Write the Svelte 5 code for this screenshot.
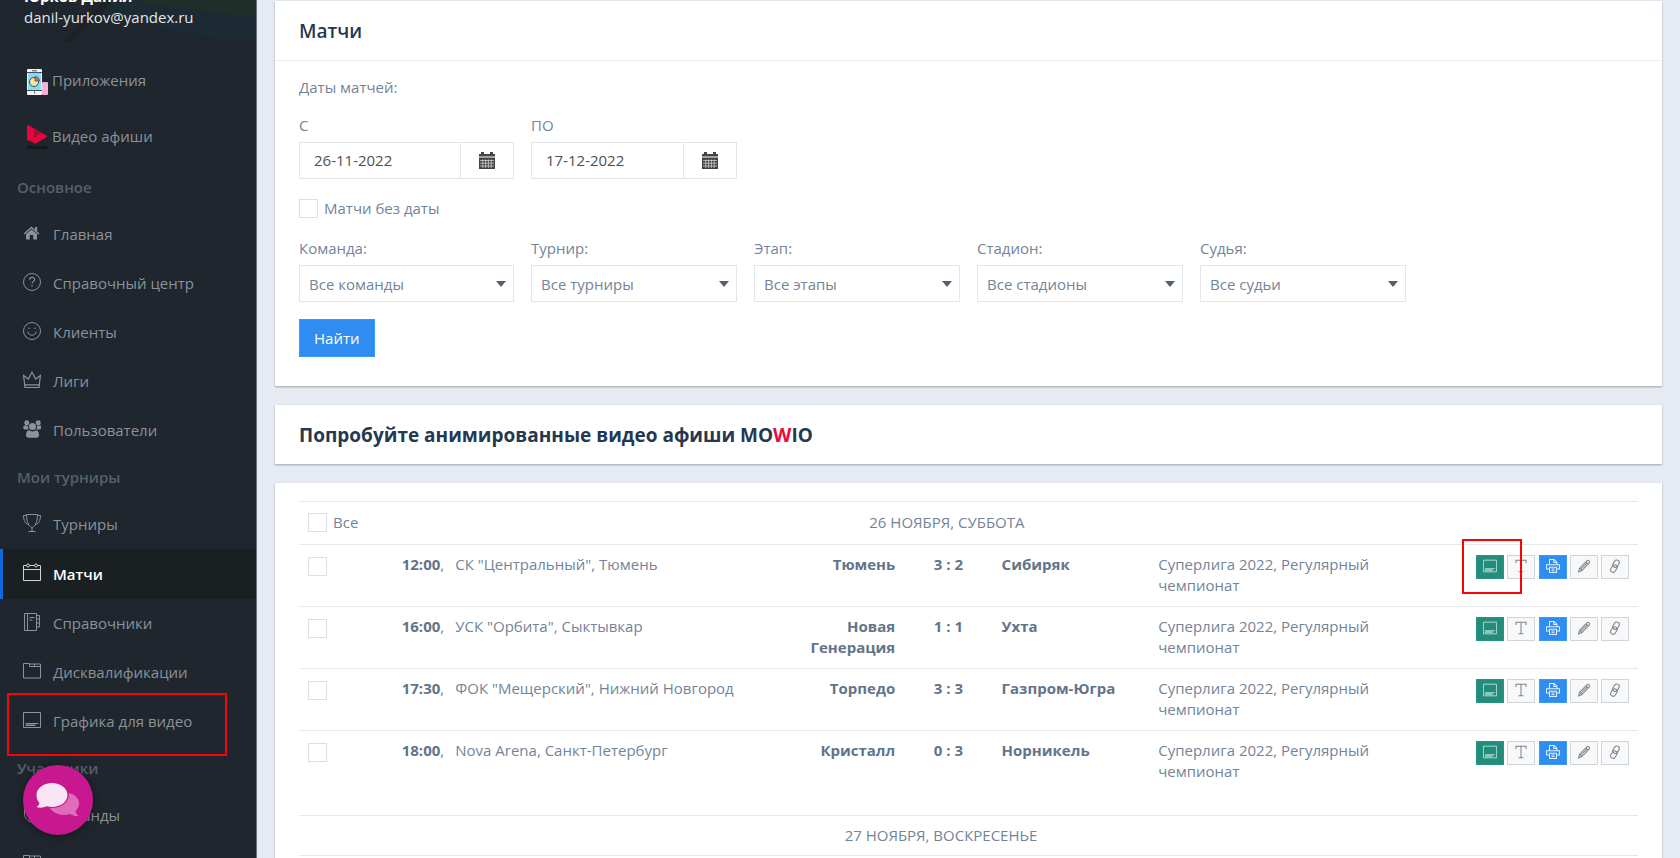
<script lang="ts">
  let withoutDate = $state(false);
  let allChecked = $state(false);
  let dateFrom = $state('26-11-2022');
  let dateTo = $state('17-12-2022');

  const mainMenu = [
    { icon: 'home', title: 'Главная' },
    { icon: 'help', title: 'Справочный центр' },
    { icon: 'smile', title: 'Клиенты' },
    { icon: 'crown', title: 'Лиги' },
    { icon: 'users', title: 'Пользователи' }
  ];

  const tournamentMenu = [
    { icon: 'cup', title: 'Турниры' },
    { icon: 'calendar', title: 'Матчи', active: true },
    { icon: 'book', title: 'Справочники' },
    { icon: 'folder', title: 'Дисквалификации' },
    { icon: 'screen', title: 'Графика для видео', marked: true }
  ];

  const memberMenu = [
    { icon: 'shield', title: 'Команды' },
    { icon: 'folder', title: 'Игроки' }
  ];

  const groups = [
    { title: 'Основное', items: mainMenu },
    { title: 'Мои турниры', items: tournamentMenu },
    { title: 'Участники', items: memberMenu }
  ];

  const filters = [
    { id: 'team', label: 'Команда:', value: 'Все команды' },
    { id: 'tournament', label: 'Турнир:', value: 'Все турниры' },
    { id: 'stage', label: 'Этап:', value: 'Все этапы' },
    { id: 'stadium', label: 'Стадион:', value: 'Все стадионы' },
    { id: 'referee', label: 'Судья:', value: 'Все судьи' }
  ];

  let matches = $state([
    { time: '12:00', place: 'СК "Центральный", Тюмень', home: 'Тюмень', score: '3 : 2', away: 'Сибиряк', checked: false },
    { time: '16:00', place: 'УСК "Орбита", Сыктывкар', home: 'Новая Генерация', score: '1 : 1', away: 'Ухта', checked: false },
    { time: '17:30', place: 'ФОК "Мещерский", Нижний Новгород', home: 'Торпедо', score: '3 : 3', away: 'Газпром-Югра', checked: false },
    { time: '18:00', place: 'Nova Arena, Санкт-Петербург', home: 'Кристалл', score: '0 : 3', away: 'Норникель', checked: false }
  ]);

  function toggleAll() {
    matches.forEach((m) => (m.checked = allChecked));
  }
</script>

<svelte:head>
  <title>Матчи</title>
</svelte:head>

{#snippet icon(name: string)}
  <svg class="icon" width="18" height="18" viewBox="0 0 18 18" fill="none" stroke="currentColor" aria-hidden="true">
    {#if name === 'home'}
      <path fill="currentColor" stroke="none" d="M8.500 5.500 14 10v5.500h-3.800v-4.500H6.800v4.500H3V10z" />
      <path stroke-width="1.500" d="M1 10 8.500 3.500 16 10" />
      <path fill="currentColor" stroke="none" d="M12 3h2.200v4.500L12 5.700z" />
    {:else if name === 'help'}
      <circle cx="9" cy="9" r="8.500" />
      <path stroke-width="1.200" d="M6.600 6.800c0-3.400 5-3.200 5-.3 0 2-2.500 1.800-2.500 4M9 12v1.500" />
    {:else if name === 'smile'}
      <circle cx="9" cy="9" r="8.500" />
      <path d="M4.800 9.500c.7 5 7.700 5 8.400 0" />
      <circle cx="6" cy="6.200" r=".8" fill="currentColor" stroke="none" />
      <circle cx="12" cy="6.200" r=".8" fill="currentColor" stroke="none" />
    {:else if name === 'crown'}
      <path stroke-width="1.200" d="M2 16.500.600 4.500 5.300 8 9 1.200 12.700 8l4.700-3.500L16 16.500zM2 13.800h14" />
    {:else if name === 'users'}
      <g fill="currentColor" stroke="none">
        <circle cx="3.800" cy="2.800" r="2.500" />
        <circle cx="15.200" cy="2.800" r="2.500" />
        <circle cx="9.500" cy="6.500" r="3.600" />
        <path d="M1.500 5.500h3.300c0 1.700.4 2.900 1.200 4H1.800C-.3 9.500-.2 6 1.500 5.500zM17.500 5.500h-3.300c0 1.700-.4 2.900-1.200 4h3.400c2.200 0 2.900-3.500 1.100-4zM6 10.300c2 1.500 5 1.500 7 0 2.300.3 3 2.700 3 4.700 0 1.800-1 2.700-2.500 2.700h-8C4 17.700 3 16.800 3 15c0-2 .7-4.400 3-4.700z" />
      </g>
    {:else if name === 'cup'}
      <path d="M3.500.500h11c0 6-1.500 11-5.500 13.500C5 11.500 3.500 6.500 3.500.500zM3.500 1.500h-3c0 5 2 8.500 5.500 9.500M14.500 1.500h3c0 5-2 8.500-5.500 9.500M9 14v3M5.500 17.500h7" />
    {:else if name === 'calendar'}
      <path d="M3.500 2.500h-3v15h17v-15h-3M6.500 2.500h5M.500 6.500h17" />
      <circle cx="5" cy="2.500" r="1.500" />
      <circle cx="13" cy="2.500" r="1.500" />
    {:else if name === 'book'}
      <path d="M1.500.500h12v17h-12zM4.500.500v17M6.500 4.500h5M6.500 7h3M13.500 2.500h3v3.500h-3M16.500 6v4h-3M16.500 10v4h-3" />
    {:else if name === 'folder'}
      <path d="M.500 1.500h6v3h11v11.500H.500zM6.500 2h11v3M11.500 2v2.500" />
    {:else if name === 'screen'}
      <path d="M.500 1.500h17v15H.500zM2.500 12.500h13M2.500 14.500h10" />
      <path opacity=".5" d="M2.500 13.500h10" />
    {:else if name === 'shield'}
      <path d="M9 .500 16.500 3v6c0 4-3 7-7.500 8.500C4.500 16 1.500 13 1.500 9V3z" />
    {:else if name === 'text'}
      <path stroke-width="1.300" d="M2.500 5V1.700h13V5M9 1.700v14.800M6 16.500h6" />
    {:else if name === 'print'}
      <path stroke-width="1.300" d="M4.500 7.500V.700h6l3.500 3.500v3.300M10 .700v3.800h4M4 13H.700V7.500h16.600V13H14M4.500 10.500h9v6.800h-9zM7 13h4M7 15.200h4" />
    {:else if name === 'pencil'}
      <path stroke-width="1.300" d="M2 16.500l1.300-4.700L13 2.100c1.300-1.300 4.200 1.400 2.900 2.800L6.300 14.800zM11.500 3.800l2.900 2.900M4 12l2 2.200M5.500 12.500 13 5" />
    {:else if name === 'link'}
      <g stroke-width="1.300">
        <rect x="7" y=".8" width="6.500" height="10" rx="3.200" transform="rotate(32 10 6)" />
        <rect x="4.500" y="7.500" width="6.500" height="10" rx="3.200" transform="rotate(32 8 12)" />
      </g>
    {/if}
  </svg>
{/snippet}

{#snippet calendarGlyph()}
  <svg width="16" height="17" viewBox="0 0 16 17" aria-hidden="true">
    <path fill="#444" d="M0 2h2V0h3v2h6V0h3v2h2v2.500H0zM0 5.500h16V17H0z" />
    <path stroke="#ddd" stroke-width=".7" d="M1 8.500h14M1 11.200h14M1 14h14M3.800 7.500v8.500M6.600 7.500v8.500M9.400 7.500v8.500M12.200 7.500v8.500" />
  </svg>
{/snippet}

<div class="page">
  <aside class="sidebar">
    <div class="user">
      <svg class="user-bg" width="257" height="42" viewBox="0 0 257 42" preserveAspectRatio="none" aria-hidden="true">
        <path fill="#1c2a33" d="M100 0h157v42C200 40 150 22 95 12z" />
        <path fill="#1f2e28" d="M125 0h132v17C215 13 170 8 125 0z" />
        <path fill="#1c2228" d="M62 42 105 0h10L72 42z" />
      </svg>
      <div class="user-name">Юрков Данил</div>
      <div class="user-mail">danil-yurkov@yandex.ru</div>
    </div>

    <a class="app" href="#apps">
      <svg width="22" height="26" viewBox="0 0 22 26" aria-hidden="true">
        <rect x="15" y="13" width="6" height="13" rx="1" fill="#f2b3d6" />
        <rect width="15" height="26" rx="1" fill="#f4f4f4" />
        <path fill="#7fdcf2" d="M1 4h13v17H1z" />
        <path stroke="#44505a" d="M0 3.500h15M0 21.500h15M5 1.800h5M7.500 22.500v2" />
        <circle cx="7" cy="13" r="4.500" fill="#f3e79b" stroke="#44505a" />
        <path fill="#f0596b" stroke="#44505a" stroke-width=".7" d="M8 12V7.500c2.500 0 4.500 2 4.500 4.500z" />
      </svg>
      <span>Приложения</span>
    </a>
    <a class="app" href="#video">
      <svg width="22" height="26" viewBox="0 0 22 26" aria-hidden="true">
        <path fill="#e6053a" d="M0 1.500C0 .4 1 0 2 .6l17 9.600c1 .5 1 1.600 0 2.100L8 18.500 2 15.600c-1 .5-2 0-2-1.200z" />
        <path fill="#a80c2e" d="M7 3.500 16 9 7 14z" />
        <path fill="#e6053a" d="M7 18V13l7-5 5 2.500c1 .5 1 1.500 0 2L8.500 18.500z" />
        <text x="0" y="24" font-size="6" font-weight="700" fill="#0e1114">mowio</text>
      </svg>
      <span>Видео афиши</span>
    </a>

    {#each groups as group}
      <div class="group">{group.title}</div>
      <nav aria-label={group.title}>
        {#each group.items as item}
          <a class="item" class:active={item.active} href="#{item.icon}">
            {@render icon(item.icon)}
            <span>{item.title}</span>
            {#if item.marked}
              <i class="mark mark-menu"></i>
            {/if}
          </a>
        {/each}
      </nav>
    {/each}
  </aside>

  <main class="content">
    <section class="panel">
      <h1 class="panel-title">Матчи</h1>
      <form class="filter" onsubmit={(e) => e.preventDefault()}>
        <p class="caption">Даты матчей:</p>
        <div class="row">
          <div class="field">
            <label for="date-from">С</label>
            <div class="date">
              <input id="date-from" type="text" bind:value={dateFrom} />
              <button type="button" aria-label="Выбрать дату начала">{@render calendarGlyph()}</button>
            </div>
          </div>
          <div class="field">
            <label for="date-to">ПО</label>
            <div class="date">
              <input id="date-to" type="text" bind:value={dateTo} />
              <button type="button" aria-label="Выбрать дату окончания">{@render calendarGlyph()}</button>
            </div>
          </div>
        </div>
        <label class="check">
          <input type="checkbox" bind:checked={withoutDate} />
          <span>Матчи без даты</span>
        </label>
        <div class="row">
          {#each filters as f}
            <div class="field">
              <label for={f.id}>{f.label}</label>
              <div class="select">
                <select id={f.id}>
                  <option>{f.value}</option>
                </select>
                <svg width="10" height="6" viewBox="0 0 10 6" aria-hidden="true"><path fill="#526170" d="M0 0h10L5 6z" /></svg>
              </div>
            </div>
          {/each}
        </div>
        <button class="find" type="submit">Найти</button>
      </form>
    </section>

    <section class="panel promo">
      <h2>Попробуйте анимированные видео афиши MO<span>W</span>IO</h2>
    </section>

    <section class="panel list">
      <table>
        <colgroup>
          <col class="c-check" />
          <col class="c-time" />
          <col class="c-place" />
          <col class="c-home" />
          <col class="c-score" />
          <col class="c-away" />
          <col class="c-tour" />
          <col class="c-actions" />
        </colgroup>
        <tbody>
          <tr class="day">
            <td colspan="2">
              <label class="check">
                <input type="checkbox" bind:checked={allChecked} onchange={toggleAll} />
                <span>Все</span>
              </label>
            </td>
            <th colspan="5">26 НОЯБРЯ, СУББОТА</th>
            <td></td>
          </tr>
          {#each matches as match, i}
            <tr>
              <td class="cell-check"><input type="checkbox" aria-label="{match.home} – {match.away}" bind:checked={match.checked} /></td>
              <td class="time"><b>{match.time}</b>,</td>
              <td>{match.place}</td>
              <td class="home"><b>{match.home}</b></td>
              <td class="score"><b>{match.score}</b></td>
              <td><b>{match.away}</b></td>
              <td>Суперлига 2022, Регулярный чемпионат</td>
              <td class="cell-actions">
                <div class="actions">
                  <button class="green" aria-label="Графика">{@render icon('screen')}</button>
                  <button aria-label="Текст">{@render icon('text')}</button>
                  <button class="blue" aria-label="Печать">{@render icon('print')}</button>
                  <button aria-label="Изменить">{@render icon('pencil')}</button>
                  <button aria-label="Ссылка">{@render icon('link')}</button>
                  {#if i === 0}
                    <i class="mark mark-action"></i>
                  {/if}
                </div>
              </td>
            </tr>
          {/each}
        </tbody>
      </table>
      <table class="next">
        <tbody>
          <tr class="day">
            <th>27 НОЯБРЯ, ВОСКРЕСЕНЬЕ</th>
          </tr>
          <tr>
            <td>&nbsp;</td>
          </tr>
        </tbody>
      </table>
    </section>
  </main>

  <button class="chat" aria-label="Чат">
    <svg width="44" height="34" viewBox="0 0 44 34" aria-hidden="true">
      <path fill="#e06cbc" d="M33 10c6 1.500 10 5.500 10 10.500 0 3-1.500 5.500-3.500 7.500.2 2 1.500 3.500 3 5-3.500.5-6.500-1-8.500-2-8 2.500-17-.5-20-6 10 1 19.500-5 19-15z" />
      <path fill="#fae5f4" d="M16 0c8.500 0 15.500 5 15.500 12S24.500 24 16 24c-2 0-3.800-.2-5.500-.7C8 24.500 4 25.500.500 24c1.500-1 2.500-2.300 3-4C1.500 18 .5 15 .5 12 .5 5 7.500 0 16 0z" />
    </svg>
  </button>
</div>

<style>
  :global(body) {
    background: #e5eaf3;
  }

  .page {
    position: relative;
    display: flex;
    height: 100vh;
    overflow: hidden;
    font-family: 'Open Sans', 'Noto Sans', sans-serif;
    font-size: 15px;
    line-height: 21px;
    color: #73849a;
  }

  .page * {
    box-sizing: border-box;
  }

  button,
  input,
  select {
    font: inherit;
    color: inherit;
    margin: 0;
  }

  button,
  select {
    cursor: pointer;
  }

  /* боковое меню */
  .sidebar {
    flex: 0 0 257px;
    background: #1f262d;
    border-right: 1px solid #6c7278;
    color: #8b9299;
    overflow: hidden;
  }

  .sidebar a {
    color: inherit;
    text-decoration: none;
  }

  .user {
    position: relative;
    display: flex;
    flex-direction: column;
    justify-content: flex-end;
    height: 53px;
    padding: 0 24px 25px;
    color: #e4e6e8;
  }

  .user-bg {
    position: absolute;
    top: 0;
    left: 0;
    width: 100%;
  }

  .user-name,
  .user-mail {
    position: relative;
  }

  .user-name {
    font-weight: 700;
    color: #fff;
  }

  .app {
    display: flex;
    align-items: center;
    gap: 3px;
    height: 56px;
    padding: 0 0 2px 27px;
  }

  .app svg {
    margin-top: 3px;
  }

  .group {
    height: 45px;
    padding: 12px 17px;
    font-weight: 600;
    color: #56606b;
  }

  .item {
    position: relative;
    display: flex;
    align-items: center;
    gap: 12px;
    height: 49px;
    padding-left: 23px;
  }

  .item .icon {
    margin-bottom: 4px;
  }

  .sidebar .item.active {
    height: 50px;
    padding-left: 20px;
    border-left: 3px solid #1168dc;
    background: #1a1f21;
    color: #fff;
    font-weight: 600;
  }

  .item.active .icon {
    opacity: .8;
  }

  /* красные рамки */
  .mark {
    position: absolute;
    border: 2px solid #f80404;
    pointer-events: none;
    z-index: 2;
  }

  .mark-menu {
    top: -4px;
    bottom: -10px;
    left: 7px;
    right: 29px;
  }

  .mark-action {
    top: -16px;
    bottom: -15px;
    left: -14px;
    width: 60px;
  }

  /* контент */
  .content {
    flex: 1;
    min-width: 0;
    padding: 1px 18px 0;
  }

  .panel {
    margin-bottom: 19px;
    background: #fff;
    box-shadow: 0 1px 2px rgba(0, 0, 0, .3);
  }

  .panel-title,
  .promo h2 {
    margin: 0;
    padding: 18px 24px 17px;
    font-size: 19px;
    font-weight: 600;
    line-height: 24px;
    color: #263850;
  }

  .panel-title {
    border-bottom: 1px solid #ebedef;
  }

  .promo h2 {
    font-weight: 700;
  }

  .promo span {
    color: #f0093c;
  }

  .filter {
    padding: 16px 24px 29px;
  }

  .caption {
    margin: 0 0 17px;
  }

  .row {
    display: grid;
    grid-template-columns: minmax(0, 215fr) repeat(4, minmax(0, 206fr)) minmax(0, 215fr);
    gap: 17px;
  }

  .field label {
    display: block;
    margin-bottom: 6px;
  }

  .date {
    display: flex;
    height: 37px;
    border: 1px solid #e2e5ea;
  }

  .date input {
    flex: 1;
    min-width: 0;
    padding: 0 14px;
    border: 0;
    color: #505050;
  }

  .date button {
    display: flex;
    align-items: center;
    justify-content: center;
    width: 53px;
    padding: 0;
    border: 0;
    border-left: 1px solid #e2e5ea;
    background: #fff;
  }

  .check {
    display: flex;
    align-items: center;
    gap: 6px;
  }

  .filter .check {
    margin: 19px 0;
  }

  input[type='checkbox'] {
    appearance: none;
    display: block;
    width: 19px;
    height: 19px;
    border: 1px solid #dcdfe3;
    background: #fff;
  }

  input[type='checkbox']:checked {
    border-color: #2f8cf0;
    background: #2f8cf0;
  }

  .select {
    position: relative;
  }

  .select select {
    appearance: none;
    display: block;
    width: 100%;
    height: 37px;
    padding: 2px 24px 0 9px;
    border: 1px solid #e4e7ea;
    border-radius: 0;
    background: #fff;
  }

  .select svg {
    position: absolute;
    top: 16px;
    right: 8px;
    pointer-events: none;
  }

  .find {
    display: block;
    height: 38px;
    margin-top: 17px;
    padding: 0 14px;
    border: 1px solid #3d97f5;
    background: #2f8cf0;
    color: #fff;
  }

  /* таблица матчей */
  .list {
    padding: 18px 24px;
  }

  table {
    width: 100%;
    table-layout: fixed;
    border-collapse: collapse;
  }

  tr {
    border-top: 1px solid #e6e8ea;
  }

  td,
  th {
    padding: 9px 9px 10px;
    text-align: left;
    vertical-align: top;
    font-weight: 400;
  }

  b {
    font-weight: 700;
    color: #62748a;
  }

  .c-check { width: 7%; }
  .c-time { width: 4%; }
  .c-place { width: 25%; }
  .c-home { width: 9.2%; }
  .c-score { width: 6.6%; }
  .c-away { width: 11.7%; }
  .c-tour { width: 22.8%; }
  .c-actions { width: 13.7%; }

  .day td,
  .day th {
    padding-top: 10px;
    padding-bottom: 11px;
    text-align: center;
  }

  .day th {
    padding-right: 16px;
  }

  .time {
    padding-right: 0;
    white-space: nowrap;
  }

  .home {
    text-align: right;
  }

  .score {
    text-align: center;
  }

  .cell-check {
    padding-top: 12px;
  }

  .cell-actions {
    padding-top: 10px;
  }

  .actions {
    position: relative;
    display: flex;
    justify-content: space-between;
    width: 153px;
    margin-left: auto;
  }

  .actions button {
    display: flex;
    align-items: center;
    justify-content: center;
    width: 28px;
    height: 24px;
    padding: 0 0 2px;
    border: 1px solid #cdd4db;
    background: #f8f8f8;
    color: #76838f;
  }

  .actions .icon {
    width: 14px;
    height: 14px;
  }

  .actions .green {
    border-color: #259684;
    background: #238c7b;
    color: #d6f0ea;
  }

  .actions .blue {
    border-color: #3d97f5;
    background: #2f8cf0;
    color: #e3f0ff;
  }

  .next {
    margin-top: 23px;
  }

  .next .day th {
    padding: 9px 64px 9px 9px;
  }

  /* чат */
  .chat {
    position: absolute;
    left: 23px;
    bottom: 23px;
    z-index: 3;
    display: flex;
    align-items: center;
    justify-content: center;
    width: 70px;
    height: 70px;
    padding: 0;
    border: 0;
    border-radius: 50%;
    background: #c8188f;
    box-shadow: 0 1px 8px rgba(0, 0, 0, .4);
  }
</style>
